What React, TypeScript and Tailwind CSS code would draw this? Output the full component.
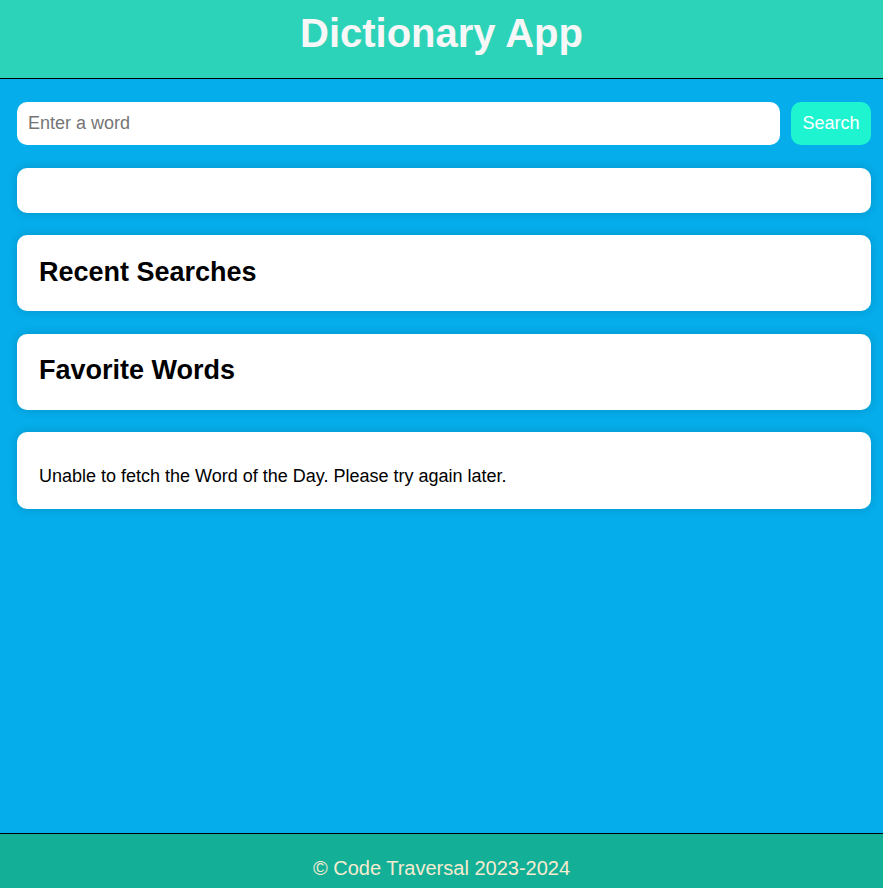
export default function App() {
  return (
    <div className="min-h-screen flex flex-col bg-[#05adea] font-['Liberation_Sans',Arial,sans-serif]">
      {/* Header */}
      <header className="h-[79px] bg-[#2dd3b8] border-b border-black pt-[10px] text-center">
        <h1 className="text-[40px] leading-[46px] font-bold text-[#f7f7f7]">Dictionary App</h1>
      </header>

      <main className="flex-1 pl-[17px] pr-[12px] pt-[23px]">
        {/* Search bar */}
        <div className="flex gap-[11px]">
          <input
            type="text"
            placeholder="Enter a word"
            className="flex-1 h-[43px] rounded-[10px] bg-white px-[11px] text-[18px] text-black placeholder:text-[#757575] outline-none"
          />
          <button className="w-[80px] h-[43px] rounded-[10px] bg-[#1ef5d0] text-white text-[18px]">
            Search
          </button>
        </div>

        {/* Result */}
        <div className="mt-[23px] h-[45px] rounded-[10px] bg-white shadow-[0_0_10px_rgba(0,0,0,0.15)]" />

        <div className="mt-[22px] h-[76px] rounded-[10px] bg-white px-[22px] pt-[22px] shadow-[0_0_10px_rgba(0,0,0,0.15)]">
          <h2 className="text-[27px] leading-[31px] font-bold text-black">Recent Searches</h2>
        </div>

        <div className="mt-[23px] h-[76px] rounded-[10px] bg-white px-[22px] pt-[21px] shadow-[0_0_10px_rgba(0,0,0,0.15)]">
          <h2 className="text-[27px] leading-[31px] font-bold text-black">Favorite Words</h2>
        </div>

        <div className="mt-[22px] h-[77px] rounded-[10px] bg-white px-[22px] pt-[34px] shadow-[0_0_10px_rgba(0,0,0,0.15)]">
          <p className="text-[18px] leading-[21px] text-black">
            Unable to fetch the Word of the Day. Please try again later.
          </p>
        </div>
      </main>

      {/* Footer */}
      <footer className="h-[55px] bg-[#13b097] border-t border-black pt-[23px] text-center">
        <p className="text-[20px] leading-[23px] text-[#f7ebd0]">© Code Traversal 2023-2024</p>
      </footer>
    </div>
  );
}
